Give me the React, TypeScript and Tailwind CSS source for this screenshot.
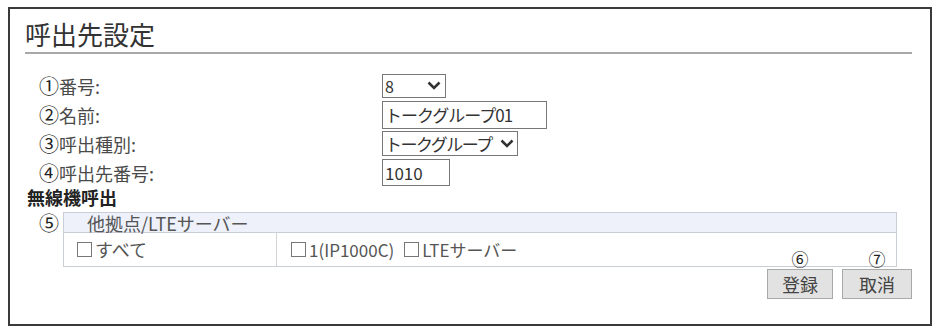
import { useState } from 'react'

function Chevron() {
    return (
        <svg width="14" height="9" viewBox="0 0 14 9" className="shrink-0">
            <path d="M1.5 1.5 L7 7 L12.5 1.5" fill="none" stroke="#333" strokeWidth="2.6" />
        </svg>
    )
}

function Check({ label }: { label: string }) {
    return (
        <label className="flex items-center">
            <span className="w-[15px] h-[15px] border border-[#777] bg-white mr-[3px]" />
            <span>{label}</span>
        </label>
    )
}

function Circled({ n, size }: { n: string, size: string }) {
    return <span className={size + ' leading-[20px] inline-block'}>{n}</span>
}

function App() {

    const [num, setNum] = useState('8')
    const [name, setName] = useState('トークグループ01')
    const [kind, setKind] = useState('トークグループ')
    const [dest, setDest] = useState('1010')

    const rows = [
        { n: '①', label: '番号:' },
        { n: '②', label: '名前:' },
        { n: '③', label: '呼出種別:' },
        { n: '④', label: '呼出先番号:' },
    ]

    return (
        <div className="w-[934px] h-[328px] bg-white pt-[7px] pl-[8px] font-['Noto_Sans_CJK_JP','Liberation_Sans',sans-serif]">
            <section className="w-[924px] h-[319px] border-2 border-[#3a3a3a] pl-[15px] pr-[18px]">
                <h1 className="pt-[10px] pb-[3px] text-[26px] leading-[30px] text-[#333] border-b-2 border-[#a8a8a8]">呼出先設定</h1>

                <div className="mt-[17px] pl-[14px] text-[18px] text-[#444]">
                    {rows.map((r, i) => (
                        <div key={i} className="flex items-center h-[29px]">
                            <div className="w-[343px] flex items-center h-[20px] leading-[20px] text-[#4a4a4a]">
                                <Circled n={r.n} size="text-[20px] text-[#222]" /><span>{r.label}</span>
                            </div>
                            {i === 0 && (
                                <div className="flex items-center w-[64px] h-[24px] border border-[#777] pr-[4px]">
                                    <select value={num} onChange={(e) => setNum(e.target.value)} className="appearance-none flex-1 min-w-0 pl-[2px] text-[16px] leading-[20px] text-[#333] outline-none bg-transparent">
                                        {['1', '2', '3', '4', '5', '6', '7', '8'].map((n) => <option key={n}>{n}</option>)}
                                    </select>
                                    <Chevron />
                                </div>
                            )}
                            {i === 1 && (
                                <input value={name} onChange={(e) => setName(e.target.value)} className="w-[165px] h-[28px] border border-[#777] px-[2px] text-[17px] tracking-[-1px] text-[#333] outline-none" />
                            )}
                            {i === 2 && (
                                <div className="flex items-center w-[136px] h-[25px] border border-[#777] pr-[3px]">
                                    <select value={kind} onChange={(e) => setKind(e.target.value)} className="appearance-none flex-1 min-w-0 pl-[2px] text-[17px] leading-[22px] tracking-[-1.5px] text-[#333] outline-none bg-transparent">
                                        <option>トークグループ</option>
                                        <option>個別</option>
                                    </select>
                                    <Chevron />
                                </div>
                            )}
                            {i === 3 && (
                                <input value={dest} onChange={(e) => setDest(e.target.value)} className="w-[68px] h-[27px] border border-[#777] px-[2px] text-[17px] text-[#333] outline-none" />
                            )}
                        </div>
                    ))}
                </div>

                <h2 className="ml-[2px] text-[18px] leading-[20px] font-bold text-[#222]">無線機呼出</h2>

                <div className="mt-[5px] pl-[14px] pr-[15px] flex items-start text-[18px] text-[#555]">
                    <div className="w-[24px] h-[21px] flex items-center text-[#222]"><Circled n="⑤" size="text-[20px]" /></div>
                    <div className="flex-1 border border-[#c9ced9]">
                        <div className="h-[20px] leading-[20px] bg-[#eef1fa] pl-[23px] border-b border-[#c9ced9]">他拠点/LTEサーバー</div>
                        <div className="flex h-[33px]">
                            <div className="w-[213px] flex items-center pl-[13px] border-r border-[#d4d4d4]">
                                <Check label="すべて" />
                            </div>
                            <div className="flex-1 flex items-center pl-[14px] gap-[10px] text-[17px]">
                                <Check label="1(IP1000C)" />
                                <Check label="LTEサーバー" />
                            </div>
                        </div>
                    </div>
                </div>

                <div className="mt-[2px] flex justify-end gap-[9px] text-[18px]">
                    <div className="relative">
                        <span className="absolute -top-[18px] left-0 right-0 text-center text-[17px] leading-[16px] text-[#222]">⑥</span>
                        <button className="w-[66px] h-[30px] bg-[#e2e2e2] border border-[#a9a9a9] text-[#444] leading-[22px]">登録</button>
                    </div>
                    <div className="relative">
                        <span className="absolute -top-[18px] left-0 right-0 text-center text-[17px] leading-[16px] text-[#222]">⑦</span>
                        <button className="w-[70px] h-[30px] bg-[#e2e2e2] border border-[#a9a9a9] text-[#444] leading-[22px]">取消</button>
                    </div>
                </div>
            </section>
        </div>
    );
}

export default App;
